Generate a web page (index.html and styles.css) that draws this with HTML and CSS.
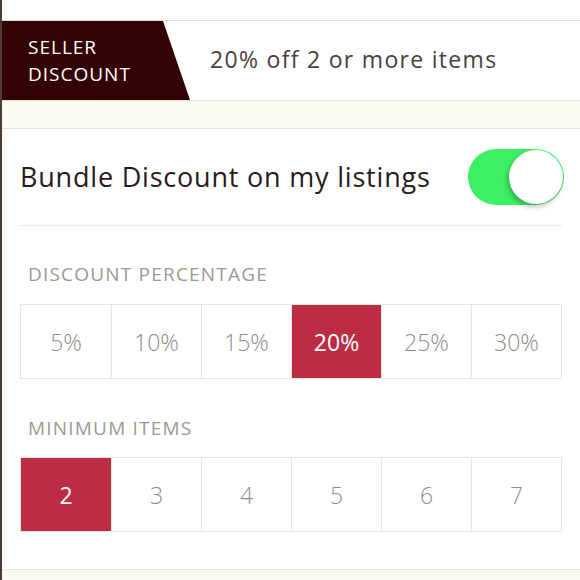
FILE: index.html
```html
<!DOCTYPE html>
<html lang="en">
<head>
    <meta charset="UTF-8">
    <meta name="viewport" content="width=device-width, initial-scale=1.0">
    <title>Seller Discount</title>
    <link rel="stylesheet" href="styles.css">
</head>
<body>
    <div class="page">
        <div class="top-space"></div>
        <div class="banner">
            <div class="badge">SELLER<br>DISCOUNT</div>
            <div class="banner-text">20% off 2 or more items</div>
        </div>
        <div class="band"></div>
        <div class="content">
            <div class="toggle-row">
                <span class="toggle-label">Bundle Discount on my listings</span>
                <div class="switch"><div class="knob"></div></div>
            </div>
            <h3 class="section-title">DISCOUNT PERCENTAGE</h3>
            <div class="segments">
                <div class="seg">5%</div>
                <div class="seg">10%</div>
                <div class="seg">15%</div>
                <div class="seg active">20%</div>
                <div class="seg">25%</div>
                <div class="seg">30%</div>
            </div>
            <h3 class="section-title second">MINIMUM ITEMS</h3>
            <div class="segments">
                <div class="seg active">2</div>
                <div class="seg">3</div>
                <div class="seg">4</div>
                <div class="seg">5</div>
                <div class="seg">6</div>
                <div class="seg">7</div>
            </div>
        </div>
        <div class="band bottom"></div>
    </div>
</body>
</html>
```

FILE: styles.css
```css
body{
    margin:0px;
    padding:0px;
    font-family:"Open Sans", Lato, sans-serif;
    background-color:#ffffff;
}

.page{
    border-left:2px solid #4d3b37;
    height:580px;
    overflow:hidden;
    box-sizing:border-box;
}

.top-space{
    height:20px;
    border-bottom:1px solid #e2e2da;
}

.banner{
    display:flex;
    align-items:center;
    height:79px;
    border-bottom:1px solid #e2e2da;
}

.banner .badge{
    width:190px;
    height:100%;
    box-sizing:border-box;
    padding:13px 0 0 26px;
    background-color:#330203;
    color:#ffffff;
    font-size:19px;
    line-height:27px;
    letter-spacing:1px;
    clip-path:polygon(0 0, 161px 0, 188px 100%, 0 100%);
}

.banner .banner-text{
    margin-left:18px;
    margin-top:-4px;
    font-size:23px;
    letter-spacing:1.3px;
    color:#4a403c;
}

.band{
    height:27px;
    background-color:#fcfbf1;
    border-bottom:1px solid #e6e6dc;
}

.band.bottom{
    margin-top:37px;
    border-top:1px solid #e6e6dc;
    border-bottom:none;
    height:20px;
}

.content{
    padding:0px 18px;
}

.toggle-row{
    display:flex;
    justify-content:space-between;
    align-items:center;
    height:96px;
    border-bottom:1px solid #ebebe2;
}

.toggle-label{
    font-size:27px;
    letter-spacing:0.8px;
    color:#2b1a1a;
    margin-top:-2px;
}

.switch{
    width:96px;
    height:56px;
    border-radius:28px;
    background-color:#3cf064;
    display:flex;
    justify-content:flex-end;
    align-items:center;
    margin-right:-2px;
}

.knob{
    width:54px;
    height:54px;
    border-radius:50%;
    background-color:#ffffff;
    box-shadow:-2px 3px 5px rgba(0,0,0,0.25);
    margin-right:1px;
}

.section-title{
    margin:35px 0 17px 8px;
    font-size:19px;
    letter-spacing:1.2px;
    font-weight:normal;
    color:#9a9a90;
}

.section-title.second{
    margin-top:36px;
    margin-bottom:16px;
}

.segments{
    display:grid;
    grid-template-columns:repeat(6, 1fr);
    border:1px solid #e6e6da;
    height:75px;
    box-sizing:border-box;
    width:542px;
}

.seg{
    display:flex;
    align-items:center;
    justify-content:center;
    border-left:1px solid #e6e6da;
    font-size:23px;
    font-weight:300;
    color:#8e8e86;
}

.seg:first-child{
    border-left:none;
}

.seg.active{
    background-color:#bc2c44;
    color:#ffffff;
    font-weight:normal;
}
```
